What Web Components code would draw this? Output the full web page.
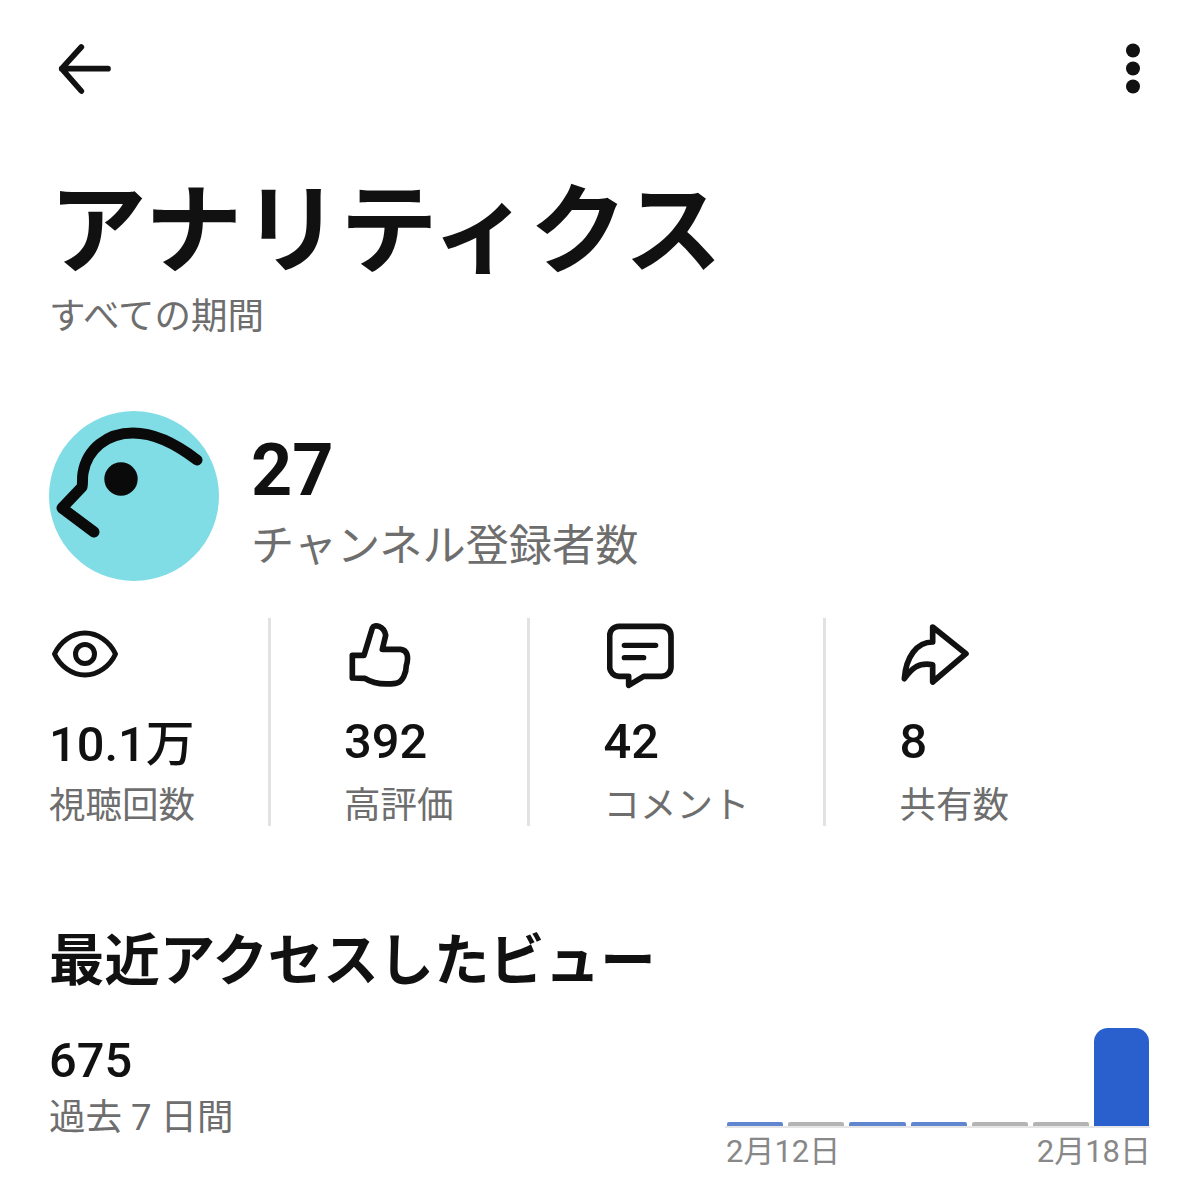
<!DOCTYPE html>
<html lang="ja"><head><meta charset="utf-8"><title>アナリティクス</title>
<style>
html,body{margin:0;background:#fff}
body{font-family:Roboto,"Noto Sans CJK JP",sans-serif;color:#111;width:1200px;height:1183px;overflow:hidden}
</style></head><body>
<analytics-page></analytics-page>
<template id="bar-t"><style>
:host{display:flex;justify-content:space-between;align-items:flex-start;height:177px;padding:0 44px 0 39px}
svg{display:block}
</style>
<svg width="80" height="90" viewBox="0 0 240 270" style="margin-top:22px"><path d="M237 143H98M157 78L98 143L157 210" transform="translate(-30 -3)" fill="none" stroke="#111" stroke-width="17" stroke-linecap="round" stroke-linejoin="round"/></svg>
<svg width="14" height="52" viewBox="0 0 14 52" style="margin-top:43px;margin-right:16px"><circle cx="7" cy="7.5" r="7" fill="#111"/><circle cx="7" cy="25.5" r="7" fill="#111"/><circle cx="7" cy="43.5" r="7" fill="#111"/></svg>
</template>
<template id="head-t"><style>
:host{display:block;padding-left:49px}
h1{margin:0;font:700 97.7px/110px Roboto,"Noto Sans CJK JP",sans-serif;color:#111}
p{margin:5px 0 0;font:400 36.5px/50px Roboto,"Noto Sans CJK JP",sans-serif;color:#6e6e6e}
</style><h1><slot name="title"></slot></h1><p><slot name="sub"></slot></p></template>
<template id="sub-t"><style>
:host{display:flex;align-items:flex-start;gap:32px;padding:69px 0 0 49px}
svg{display:block}
.t{margin-top:18px}
b{display:block;font:700 72px/84px Roboto,"Noto Sans CJK JP",sans-serif;color:#111}
span{display:block;margin-top:4px;font:400 43.2px/60px Roboto,"Noto Sans CJK JP",sans-serif;color:#6e6e6e}
</style>
<svg width="170" height="170" viewBox="0 0 170 170"><circle cx="85" cy="85" r="85" fill="#80dde6"/><path d="M148 49C126 32 104 22 84 22C58 22 38 38 34 62C33 68 34 72 33 76L13 97L45 121" fill="none" stroke="#0a0a0a" stroke-width="11" stroke-linecap="round" stroke-linejoin="round"/><circle cx="72" cy="68" r="16.7" fill="#0a0a0a"/></svg>
<div class="t"><b><slot name="num"></slot></b><span><slot name="label"></slot></span></div></template>
<template id="stats-t"><style>
:host{display:flex;padding:37px 0 0 49px}
</style><slot></slot></template>
<template id="stat-t"><style>
:host{display:block;height:208px;box-sizing:border-box;padding-right:73px;margin-right:74px;border-right:3px solid #e2e2e2}
:host(:first-child){margin-right:73px}
:host(:last-child){border:0}
.i{display:flow-root;height:94px}
b{display:block;height:60px;font:500 48.8px/60px Roboto,"Noto Sans CJK JP",sans-serif;color:#111;white-space:nowrap}
span{display:block;margin-top:14px;font:400 36.5px/40px Roboto,"Noto Sans CJK JP",sans-serif;color:#6e6e6e;white-space:nowrap}
</style><div class="i"><slot name="icon"></slot></div><b><slot name="num"></slot></b><span><slot name="label"></slot></span></template>
<template id="recent-t"><style>
:host{display:block;padding:99px 50px 0 49px}
h2{margin:0;font:700 55.4px/74px Roboto,"Noto Sans CJK JP",sans-serif;color:#111}
.row{display:flex;justify-content:space-between;margin-top:31px}
b{display:block;font:500 48.8px/60px Roboto,"Noto Sans CJK JP",sans-serif;color:#111;margin-top:1px}
span{display:block;font:400 36.5px/54px Roboto,"Noto Sans CJK JP",sans-serif;color:#6e6e6e}
</style><h2><slot name="title"></slot></h2><div class="row"><div><b><slot name="num"></slot></b><span><slot name="label"></slot></span></div><slot name="chart"></slot></div></template>
<template id="chart-t"><style>
:host{display:block;width:425px;margin-top:-2px}
.bars{display:flex;gap:5px;align-items:flex-end;height:98px;padding:0 1px 0 2px;border-bottom:2px solid #e6e6e6}
i{display:block;flex:1;height:4px;border-radius:2px 2px 0 0;background:#b4b4b4}
i.b{background:#5f86cf}
i.big{height:98px;border-radius:14px 14px 0 0;background:#2a60cd;flex:0 0 55px}
.d{display:flex;justify-content:space-between;margin:0 -1px 0 1px;font:400 31px/48px Roboto,"Noto Sans CJK JP",sans-serif;color:#888}
</style><div class="bars"><i class="b"></i><i></i><i class="b"></i><i class="b"></i><i></i><i></i><i class="big"></i></div><div class="d"><span>2月12日</span><span>2月18日</span></div></template>
<script>
const def=(n,t)=>customElements.define(n,class extends HTMLElement{constructor(){super();this.attachShadow({mode:'open'}).append(document.getElementById(t).content.cloneNode(true))}});
def('top-bar','bar-t');def('page-head','head-t');def('sub-card','sub-t');def('stat-row','stats-t');def('stat-cell','stat-t');def('recent-views','recent-t');def('mini-chart','chart-t');
customElements.define('analytics-page',class extends HTMLElement{constructor(){super();this.attachShadow({mode:'open'}).innerHTML=`<style>:host{display:block}svg{display:block}</style>
<top-bar></top-bar>
<page-head><span slot="title">アナリティクス</span><span slot="sub">すべての期間</span></page-head>
<sub-card><span slot="num">27</span><span slot="label">チャンネル登録者数</span></sub-card>
<stat-row>
<stat-cell><svg slot="icon" width="70" height="54" viewBox="0 0 70 54" style="margin-top:10px;margin-left:1px"><path d="M4.5 26C10 14 22 5 35 5S60 14 65.5 26C60 38 48 47 35 47S10 38 4.5 26Z" fill="none" stroke="#111" stroke-width="5" stroke-linejoin="round"/><circle cx="35" cy="26" r="9.5" fill="none" stroke="#111" stroke-width="5"/></svg><span slot="num" style="line-height:66px">10.1万</span><span slot="label">視聴回数</span></stat-cell>
<stat-cell><svg slot="icon" width="80" height="80" viewBox="60 30 240 240" style="margin:4px 0 0 5px"><path d="M70 130L105 130L130 48C135 36 165 40 170 70L160 112L215 112C235 114 240 135 232 160C232 180 222 212 200 214C165 218 130 214 108 199L70 198Z" fill="none" stroke="#111" stroke-width="17" stroke-linejoin="round"/></svg><span slot="num">392</span><span slot="label">高評価</span></stat-cell>
<stat-cell><svg slot="icon" width="80" height="80" viewBox="830 35 240 240" style="margin:4px 0 0 3px"><path d="M866 48H994A28 28 0 0 1 1022 76V170A28 28 0 0 1 994 198H940L895 225V198H866A28 28 0 0 1 838 170V76A28 28 0 0 1 866 48Z" fill="none" stroke="#111" stroke-width="17" stroke-linejoin="round"/><path d="M882 105H976M882 142H940" stroke="#111" stroke-width="16" stroke-linecap="round"/></svg><span slot="num">42</span><span slot="label">コメント</span></stat-cell>
<stat-cell><svg slot="icon" width="80" height="80" viewBox="60 35 240 240" style="margin:4px 0 0 0"><path d="M158 50L258 130L158 215V163C115 155 95 175 73 205C78 140 110 95 158 95Z" fill="none" stroke="#111" stroke-width="17" stroke-linejoin="round"/></svg><span slot="num">8</span><span slot="label">共有数</span></stat-cell>
</stat-row>
<recent-views><span slot="title">最近アクセスしたビュー</span><span slot="num">675</span><span slot="label">過去 7 日間</span><mini-chart slot="chart"></mini-chart></recent-views>`}});
</script></body></html>
